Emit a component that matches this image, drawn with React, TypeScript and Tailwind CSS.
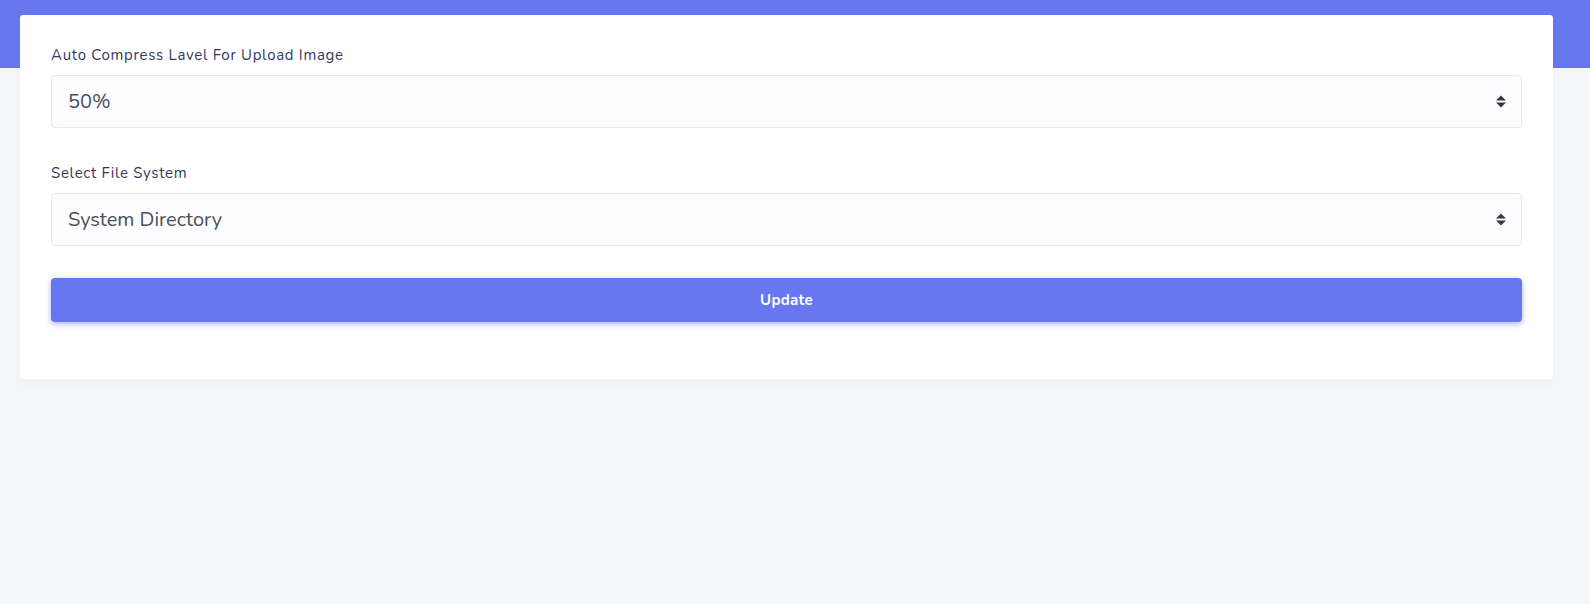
import { useState } from "react";

function SortIcon() {
  return (
    <svg width="10" height="13" viewBox="0 0 10 13" className="shrink-0">
      <path d="M0 5.5 L5 0.5 L10 5.5 Z" fill="#343a40" />
      <path d="M0 7.5 L10 7.5 L5 12.5 Z" fill="#343a40" />
    </svg>
  );
}

function SelectField({
  label,
  value,
  options,
  onChange,
  className = "",
}: {
  label: string;
  value: string;
  options: string[];
  onChange: (v: string) => void;
  className?: string;
}) {
  return (
    <div className={className}>
      <label className="block text-[15px] leading-[20px] tracking-[0.7px] text-[#34395e] mb-[10px]">
        {label}
      </label>
      <div className="relative h-[53px] rounded-[4px] border border-[#e4e6fc] bg-[#fdfdff] flex items-center pl-[16px] pr-[15px]">
        <select
          value={value}
          onChange={(e) => onChange(e.target.value)}
          className="absolute inset-0 opacity-0 cursor-pointer"
        >
          {options.map((o) => (
            <option key={o}>{o}</option>
          ))}
        </select>
        <span className="flex-1 text-[20px] text-[#495057]">{value}</span>
        <SortIcon />
      </div>
    </div>
  );
}

export default function App() {
  const [level, setLevel] = useState("50%");
  const [fs, setFs] = useState("System Directory");

  return (
    <div
      className="relative min-h-[604px] bg-[#f4f6f9]"
      style={{ fontFamily: "Nunito, Lato, 'Noto Sans', sans-serif" }}
    >
      <div className="absolute top-0 left-0 right-0 h-[68px] bg-[#6777ef]" />
      <div className="relative pt-[15px] pl-[20px] pr-[37px]">
        <div className="bg-white rounded-[3px] shadow-[0_4px_8px_rgba(0,0,0,0.03)] pt-[30px] pb-[57px] px-[31px]">
          <SelectField
            label="Auto Compress Lavel For Upload Image"
            value={level}
            options={["10%", "20%", "30%", "40%", "50%", "60%", "70%", "80%", "90%", "100%"]}
            onChange={setLevel}
          />
          <SelectField
            className="mt-[35px]"
            label="Select File System"
            value={fs}
            options={["System Directory", "Amazon S3", "Google Cloud Storage"]}
            onChange={setFs}
          />
          <button
            type="button"
            className="mt-[32px] w-full h-[44px] rounded-[4px] bg-[#6777ef] text-white text-[15px] font-bold tracking-[0.3px] shadow-[0_2px_6px_#acb5f6]"
          >
            Update
          </button>
        </div>
      </div>
    </div>
  );
}
